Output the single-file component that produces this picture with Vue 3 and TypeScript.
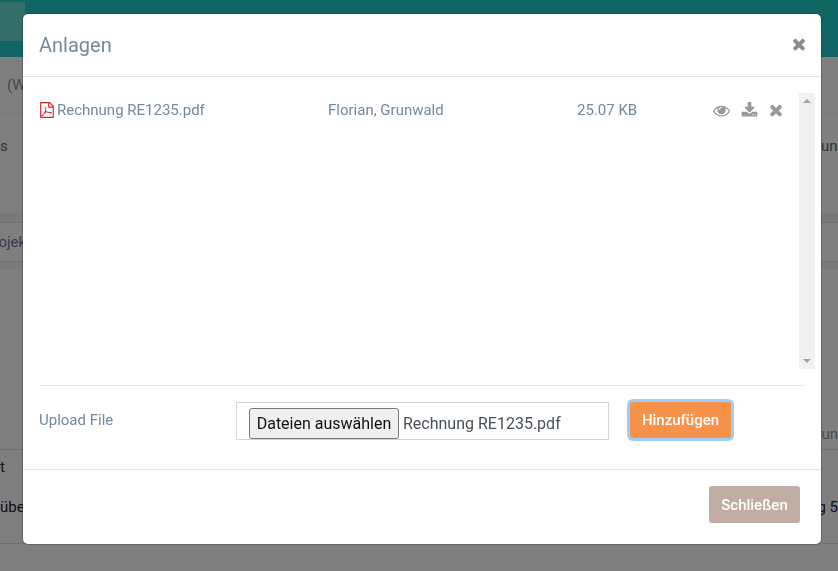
<script setup lang="ts">
interface Attachment {
  name: string;
  author: string;
  size: string;
}

const attachments: Attachment[] = [{ name: 'Rechnung RE1235.pdf', author: 'Florian, Grunwald', size: '25.07 KB' }];

const timesPath =
  'M1490 1322q0 40-28 68l-136 136q-28 28-68 28t-68-28l-294-294-294 294q-28 28-68 28t-68-28l-136-136q-28-28-28-68t28-68l294-294-294-294q-28-28-28-68t28-68l136-136q28-28 68-28t68 28l294 294 294-294q28-28 68-28t68 28l136 136q28 28 28 68t-28 68l-294 294 294 294q28 28 28 68z';
const eyePath =
  'M1664 960q-152-236-381-353 61 104 61 225 0 185-131.500 316.500t-316.500 131.500-316.500-131.500-131.500-316.500q0-121 61-225-229 117-381 353 133 205 333.500 326.500t434.500 121.500 434.500-121.500 333.500-326.500zm-720-384q0-20-14-34t-34-14q-125 0-214.500 89.500t-89.500 214.500q0 20 14 34t34 14 34-14 14-34q0-86 61-147t147-61q20 0 34-14t14-34zm848 384q0 34-20 69-140 230-376.500 368.500t-499.500 138.500-499.500-139-376.500-368q-20-35-20-69t20-69q140-229 376.500-368t499.500-139 499.500 139 376.500 368q20 35 20 69z';
const downloadPath =
  'M1344 1344q0-26-19-45t-45-19-45 19-19 45 19 45 45 19 45-19 19-45zm256 0q0-26-19-45t-45-19-45 19-19 45 19 45 45 19 45-19 19-45zm128-224v320q0 40-28 68t-68 28h-1472q-40 0-68-28t-28-68v-320q0-40 28-68t68-28h465l135 136q58 56 136 56t136-56l136-136h464q40 0 68 28t28 68zm-325-569q17 41-14 70l-448 448q-18 19-45 19t-45-19l-448-448q-31-29-14-70 17-39 59-39h256v-448q0-26 19-45t45-19h256q26 0 45 19t19 45v448h256q42 0 59 39z';
const pdfPath =
  'M1596 380q28 28 48 76t20 88v1152q0 40-28 68t-68 28h-1344q-40 0-68-28t-28-68v-1600q0-40 28-68t68-28h896q40 0 88 20t76 48zm-444-244v376h376q-10-29-22-41l-313-313q-12-12-41-22zm384 1528v-1024h-416q-40 0-68-28t-28-68v-416h-768v1536h1280zm-514-593q25 20 64 44 74-9 147-9 185 0 222 62 20 28 2 66 0 1-1 2l-2 2v1q-7 48-87 48-59 0-141-25t-159-66q-254 28-450 95-175 300-277 300-17 0-33-8l-24-12q-1-1-6-5-10-10-8-28 3-36 51-90.500t132-101.500q14-9 23 6 2 2 2 4 51-83 105-192 67-134 102-258-24-82-30.500-159.500t6.500-127.500q11-40 42-40h22q23 0 35 15 18 21 9 68-2 6-4 8 1 3 1 8v30q-2 123-14 192 55 164 146 238zm-576 411q52-24 137-158-51 40-87.500 84t-49.500 74zm398-920q-15 42-2 132 1-7 7-44 0-3 7-43 1-4 4-8-1-1-1-2-1-2-1-3-1-22-13-36 0 1-1 2v2zm-124 661q135-54 284-81-2-1-13-9.500t-16-13.500q-76-67-127-176-27 86-83 197-30 56-45 83zm646-16q-24-24-140-24 76 28 124 28 14 0 18-1 0-1-2-3z';
</script>

<template>
  <div class="page">
    <header class="page__top">
      <div class="page__logo" />
    </header>
    <div class="page__row page__row--title"><span>(W</span></div>
    <div class="page__row page__row--info">
      <span>s</span>
      <span>und</span>
    </div>
    <div class="page__band"><span>Projekt</span></div>
    <div class="page__row page__row--amount">
      <span>Amount</span>
    </div>
    <div class="page__row page__row--head">
      <span>t</span>
    </div>
    <div class="page__row page__row--body">
      <span>übe</span>
      <span>g 5</span>
    </div>
  </div>

  <div class="overlay">
    <div class="modal">
      <div class="modal__header">
        <h4 class="modal__title">Anlagen</h4>
        <svg class="modal__close" viewBox="0 0 1792 1792"><path :d="timesPath" /></svg>
      </div>

      <div class="modal__body">
        <div class="files">
          <div class="files__list">
            <div v-for="file in attachments" :key="file.name" class="files__row">
              <span class="files__name">
                <svg class="files__pdf" viewBox="0 0 1792 1792"><path :d="pdfPath" /></svg>
                {{ file.name }}
              </span>
              <span>{{ file.author }}</span>
              <span>{{ file.size }}</span>
              <span class="files__actions">
                <svg class="icon icon--eye" viewBox="0 0 1792 1792"><path :d="eyePath" /></svg>
                <svg class="icon icon--down" viewBox="0 0 1792 1792"><path :d="downloadPath" /></svg>
                <svg class="icon icon--del" viewBox="0 0 1792 1792"><path :d="timesPath" /></svg>
              </span>
            </div>
          </div>
          <div class="scrollbar">
            <i class="scrollbar__up" />
            <i class="scrollbar__down" />
          </div>
        </div>

        <div class="upload">
          <span class="upload__label">Upload File</span>
          <div class="upload__input">
            <button type="button" class="upload__pick">Dateien auswählen</button>
            <span class="upload__file">Rechnung RE1235.pdf</span>
          </div>
          <button type="button" class="btn btn--add">Hinzufügen</button>
        </div>
      </div>

      <div class="modal__footer">
        <button type="button" class="btn btn--close">Schließen</button>
      </div>
    </div>
  </div>
</template>

<style>
html,
body {
  margin: 0;
  height: 100%;
  overflow: hidden;
}
</style>

<style scoped>
.page {
  height: 571px;
  overflow: hidden;
  background: #fff;
  color: #2c3440;
  font-family: Roboto, 'Liberation Sans', sans-serif;
  font-size: 15px;
}

.page__top {
  height: 57px;
  padding-top: 2px;
  box-sizing: border-box;
  background: #20ccc6;
}

.page__logo {
  width: 25px;
  height: 39px;
  background: #66dcd2;
}

.page__row {
  display: flex;
  justify-content: space-between;
  align-items: center;
  white-space: nowrap;
}

.page__row--title {
  height: 57px;
  box-sizing: border-box;
  padding-left: 7px;
  border-bottom: 1px solid #f0f0f0;
  color: #8a8f98;
}

.page__row--info {
  height: 108px;
  box-sizing: border-box;
  padding-bottom: 44px;
  margin-right: -8px;
  color: #666b74;
}

.page__band {
  display: flex;
  align-items: center;
  height: 40px;
  box-sizing: border-box;
  border-top: 1px solid #e0e0e0;
  border-bottom: 1px solid #e0e0e0;
  box-shadow: 0 -9px 0 #f4f4f4, 0 7px 0 #f4f4f4;
  color: #6f7b96;
  text-indent: -16px;
}

.page__row--amount {
  justify-content: flex-end;
  height: 31px;
  margin: 156px -5px 0 0;
  color: #9a9a9a;
}

.page__row--head {
  height: 34px;
  box-sizing: border-box;
  border-top: 1px solid #e0e0e0;
}

.page__row--body {
  height: 61px;
  box-sizing: border-box;
  padding-bottom: 12px;
  border-bottom: 1px solid #e0e0e0;
  color: #222;
}

.overlay {
  position: fixed;
  inset: 0;
  padding: 14px 0 0 23px;
  background: rgba(0, 0, 0, 0.5);
  font-family: Roboto, 'Liberation Sans', sans-serif;
}

.modal {
  width: 798px;
  height: 530px;
  display: flex;
  flex-direction: column;
  background: #fff;
  border-radius: 5px;
  box-shadow: 0 0 0 1px rgba(0, 0, 0, 0.2);
  color: #7488a0;
}

.modal__header {
  flex: none;
  height: 63px;
  box-sizing: border-box;
  display: flex;
  justify-content: space-between;
  align-items: center;
  padding: 0 16px;
  border-bottom: 1px solid #e3e6ea;
}

.modal__title {
  margin: 0;
  font-size: 20px;
  font-weight: 400;
  line-height: 24px;
  padding-bottom: 1px;
}

.modal__close {
  width: 18px;
  height: 18px;
  margin-right: -3px;
  margin-bottom: 3px;
  fill: #8c8c8c;
}

.modal__body {
  flex: 1;
  min-height: 0;
  padding: 16px 16px 0;
}

.files {
  display: flex;
  height: 276px;
  margin-right: -10px;
}

.files__list {
  flex: 1;
}

.files__row {
  display: grid;
  grid-template-columns: 289px 249px 136px 1fr;
  align-items: center;
  height: 34px;
  font-size: 15px;
  line-height: 18px;
}

.files__name {
  display: flex;
  align-items: center;
  gap: 2px;
}

.files__pdf {
  width: 16px;
  height: 16px;
  fill: #d8232a;
}

.files__actions {
  display: flex;
  align-items: center;
}

.icon {
  fill: #999;
}

.icon--eye {
  width: 17px;
  height: 17px;
}

.icon--down {
  width: 17px;
  height: 17px;
  margin-left: 11px;
  margin-top: 1px;
}

.icon--del {
  width: 18px;
  height: 18px;
  margin-left: 9px;
  margin-top: -1px;
}

.scrollbar {
  position: relative;
  flex: none;
  width: 16px;
  height: 276px;
  background: #f1f1f1;
}

.scrollbar__up,
.scrollbar__down {
  position: absolute;
  left: 4px;
  width: 0;
  height: 0;
  border-left: 4px solid transparent;
  border-right: 4px solid transparent;
}

.scrollbar__up {
  top: 6px;
  border-bottom: 4px solid #a3a3a3;
}

.scrollbar__down {
  bottom: 6px;
  border-top: 4px solid #a3a3a3;
}

.upload {
  display: flex;
  align-items: center;
  height: 68px;
  margin-top: 16px;
  border-top: 1px solid #e3e6ea;
}

.upload__label {
  flex: none;
  width: 197px;
  font-size: 15px;
}

.upload__input {
  flex: none;
  display: flex;
  align-items: flex-end;
  gap: 4px;
  width: 373px;
  height: 38px;
  margin-top: 2px;
  box-sizing: border-box;
  padding: 0 0 0 12px;
  border: 1px solid #ced4da;
  color: #495057;
  font-size: 16px;
}

.upload__pick {
  height: 31px;
  width: 150px;
  padding: 0;
  border: 1px solid #767676;
  border-radius: 3px;
  background: #efefef;
  color: #111;
  font-family: inherit;
  font-size: 16px;
}

.upload__file {
  line-height: 31px;
}

.btn {
  box-sizing: border-box;
  border: 0;
  border-radius: 3px;
  color: #fff;
  font-family: inherit;
  font-size: 15px;
  font-weight: 500;
}

.btn--add {
  flex: none;
  width: 101px;
  height: 36px;
  margin-left: 21px;
  background: #f7924a;
  box-shadow: 0 0 0 3px #9ccdfb;
}

.modal__footer {
  flex: none;
  height: 75px;
  box-sizing: border-box;
  display: flex;
  justify-content: flex-end;
  align-items: flex-start;
  padding: 16px 21px 0 0;
  border-top: 1px solid #e3e6ea;
}

.btn--close {
  width: 91px;
  height: 37px;
  background: #c1ada3;
}
</style>
